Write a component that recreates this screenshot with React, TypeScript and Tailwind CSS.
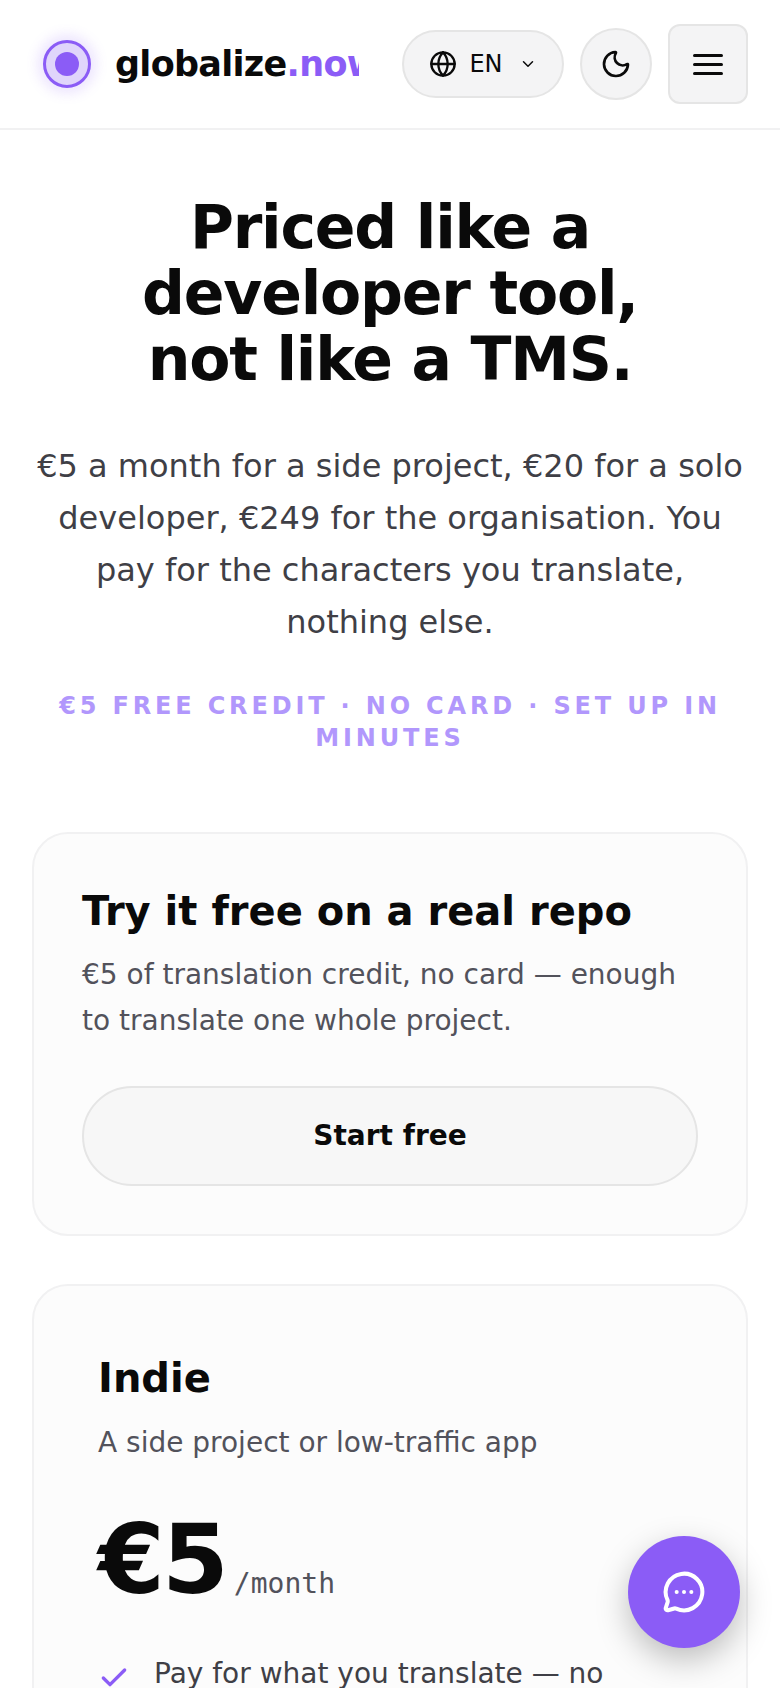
import { Check, ChevronDown, Globe, MessageCircleMore, Moon } from 'lucide-react'

function Header() {
  return (
    <header className="flex h-[130px] items-center justify-between border-b-2 border-[#f1f1f2] pl-[43px] pr-[32px]">
      <div className="flex items-center gap-[24px]">
        <div className="flex h-[48px] w-[48px] items-center justify-center rounded-full border-[3px] border-[#8b5cf6] bg-[#e0d5fb] shadow-[0_0_12px_6px_rgba(139,92,246,0.15)]">
          <div className="h-[24px] w-[24px] rounded-full bg-[#8b5cf6]" />
        </div>
        <div className="w-[244px] overflow-hidden whitespace-nowrap text-[35px] font-bold tracking-[-0.02em] text-[#0a0a0a]">
          globalize<span className="text-[#8b5cf6]">.now</span>
        </div>
      </div>
      <div className="flex items-center gap-[16px]">
        <button className="flex h-[68px] w-[162px] items-center justify-center gap-[12px] rounded-full border-2 border-[#e5e5e5] bg-[#f4f4f5] text-[24px] text-[#0a0a0a]">
          <Globe className="h-[28px] w-[28px]" strokeWidth={2} />
          <span>EN</span>
          <ChevronDown className="ml-[4px] h-[18px] w-[18px]" strokeWidth={2} />
        </button>
        <button className="flex h-[72px] w-[72px] items-center justify-center rounded-full border-2 border-[#e5e5e5] bg-[#f4f4f5] text-[#0a0a0a]">
          <Moon className="h-[32px] w-[32px]" strokeWidth={2} />
        </button>
        <button className="flex h-[80px] w-[80px] flex-col items-center justify-center gap-[6px] rounded-[12px] border-2 border-[#e5e5e5] bg-[#f4f4f5]">
          <span className="h-[3px] w-[30px] rounded-full bg-[#0a0a0a]" />
          <span className="h-[3px] w-[30px] rounded-full bg-[#0a0a0a]" />
          <span className="h-[3px] w-[30px] rounded-full bg-[#0a0a0a]" />
        </button>
      </div>
    </header>
  )
}

function Hero() {
  return (
    <section className="px-[32px] pt-[64px] text-center">
      <h1 className="mx-auto w-[560px] text-[60px] font-bold leading-[66px] tracking-[-0.02em] text-[#0a0a0a]">
        Priced like a developer tool, not like a TMS.
      </h1>
      <p className="mt-[48px] text-[32px] leading-[52px] text-[#3f3f46]">
        €5 a month for a side project, €20 for a solo developer, €249 for the organisation. You pay for the characters you translate, nothing else.
      </p>
      <p className="mt-[42px] text-[24px] font-bold uppercase leading-[32px] tracking-[0.16em] text-[#b197fc]">
        €5 free credit · no card · set up in minutes
      </p>
    </section>
  )
}

export default function App() {
  return (
    <div className="relative h-[1688px] overflow-hidden bg-white font-['DejaVu_Sans',sans-serif]">
      <Header />
      <Hero />
      <main className="flex flex-col gap-[48px] px-[32px] pt-[78px]">
        <section className="rounded-[36px] border-2 border-[#f1f1f2] bg-[#fcfcfc] px-[48px] pb-[48px] pt-[51px]">
          <h2 className="text-[40px] font-bold leading-[52px] text-[#0a0a0a]">Try it free on a real repo</h2>
          <p className="mt-[15px] text-[28px] leading-[46px] text-[#52525b]">
            €5 of translation credit, no card — enough to translate one whole project.
          </p>
          <button className="mt-[42px] h-[100px] w-full rounded-full border-2 border-[#e5e5e5] bg-[#f7f7f7] text-[28px] font-bold text-[#0a0a0a]">
            Start free
          </button>
        </section>
        <section className="h-[700px] rounded-[36px] border-2 border-[#f1f1f2] bg-[#fcfcfc] px-[64px] pt-[66px]">
          <h2 className="text-[40px] font-bold leading-[52px] text-[#0a0a0a]">Indie</h2>
          <p className="mt-[16px] text-[28px] leading-[46px] text-[#52525b]">A side project or low-traffic app</p>
          <div className="mt-[38px] flex items-baseline gap-[8px]">
            <span className="text-[96px] font-bold leading-[112px] tracking-[-0.03em] text-[#0a0a0a]">€5</span>
            <span className="font-['DejaVu_Sans_Mono',monospace] text-[28px] text-[#52525b]">/month</span>
          </div>
          <ul className="mt-[36px]">
            <li className="flex items-start gap-[24px] text-[28px] leading-[44px] text-[#3f3f46]">
              <Check className="mt-[10px] h-[32px] w-[32px] shrink-0 text-[#8b5cf6]" strokeWidth={2.5} />
              <span>Pay for what you translate — no</span>
            </li>
          </ul>
        </section>
      </main>
      <button className="absolute left-[628px] top-[1536px] flex h-[112px] w-[112px] items-center justify-center rounded-full bg-[#8b5cf6] text-white shadow-[0_12px_32px_rgba(0,0,0,0.25)]">
        <MessageCircleMore className="h-[44px] w-[44px]" strokeWidth={2.2} />
      </button>
    </div>
  )
}
